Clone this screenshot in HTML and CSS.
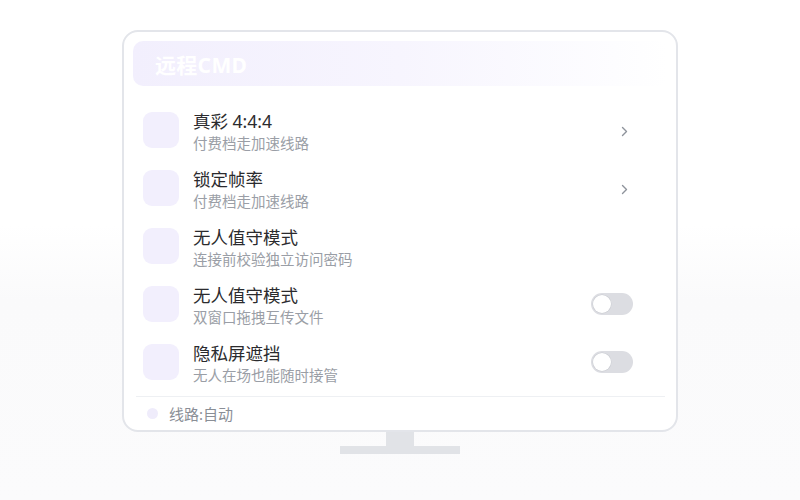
FILE: index.html
```html
<!DOCTYPE html>
<html lang="zh-CN">
<head>
  <meta charset="UTF-8" />
  <meta name="viewport" content="width=device-width, initial-scale=1.0" />
  <title>远程CMD</title>
  <link rel="stylesheet" href="styles.css">
</head>
<body>
  <div class="stage">
    <div class="monitor">
      <header class="panel-head">
        <h1>远程CMD</h1>
      </header>

      <!-- settings list -->
      <ul class="rows">
        <li class="row">
          <span class="row-icon"></span>
          <div class="row-text">
            <p class="row-title">真彩 4:4:4</p>
            <p class="row-sub">付费档走加速线路</p>
          </div>
          <svg class="chev" width="7" height="11" viewBox="0 0 7 11"><path d="M1.5 1.5 L5.5 5.5 L1.5 9.5" fill="none" stroke="#8e939b" stroke-width="1.4" stroke-linecap="round" stroke-linejoin="round"/></svg>
        </li>
        <li class="row">
          <span class="row-icon"></span>
          <div class="row-text">
            <p class="row-title">锁定帧率</p>
            <p class="row-sub">付费档走加速线路</p>
          </div>
          <svg class="chev" width="7" height="11" viewBox="0 0 7 11"><path d="M1.5 1.5 L5.5 5.5 L1.5 9.5" fill="none" stroke="#8e939b" stroke-width="1.4" stroke-linecap="round" stroke-linejoin="round"/></svg>
        </li>
        <li class="row">
          <span class="row-icon"></span>
          <div class="row-text">
            <p class="row-title">无人值守模式</p>
            <p class="row-sub">连接前校验独立访问密码</p>
          </div>
        </li>
        <li class="row">
          <span class="row-icon"></span>
          <div class="row-text">
            <p class="row-title">无人值守模式</p>
            <p class="row-sub">双窗口拖拽互传文件</p>
          </div>
          <span class="toggle"><span class="knob"></span></span>
        </li>
        <li class="row">
          <span class="row-icon"></span>
          <div class="row-text">
            <p class="row-title">隐私屏遮挡</p>
            <p class="row-sub">无人在场也能随时接管</p>
          </div>
          <span class="toggle"><span class="knob"></span></span>
        </li>
      </ul>

      <footer class="panel-foot">
        <span class="dot"></span>
        <span>线路:自动</span>
      </footer>
    </div>
    <div class="neck"></div>
    <div class="base"></div>
  </div>
</body>
</html>
```

FILE: styles.css
```css
html, body, h1, p, ul, li {
  margin: 0;
  padding: 0;
}

body {
  width: 800px;
  height: 500px;
  background: linear-gradient(#ffffff 0, #ffffff 45%, #fafafb 60%, #fbfbfc 100%);
  font-family: "Noto Sans", "Noto Sans CJK SC", sans-serif;
  color: #333;
}

.stage {
  padding-top: 30px;
  display: flex;
  flex-direction: column;
  align-items: center;
}

.monitor {
  box-sizing: border-box;
  width: 556px;
  height: 402px;
  border: 2px solid #e3e5ea;
  border-radius: 16px;
  background: #fff;
  padding: 9px 8px 0 9px;
  display: flex;
  flex-direction: column;
}

.panel-head {
  height: 45px;
  border-radius: 10px;
  background: linear-gradient(90deg, #f2effd 0%, #f7f5fe 50%, #fdfdff 90%, #ffffff 100%);
  display: flex;
  align-items: center;
  padding-left: 22px;
}

.panel-head h1 {
  font-size: 21px;
  font-weight: 700;
  color: #fff;
  letter-spacing: 0.3px;
}

.rows {
  list-style: none;
  margin-top: 15px;
}

.row {
  height: 58px;
  display: flex;
  align-items: center;
  padding: 0 35px 0 10px;
}

.row-icon {
  width: 36px;
  height: 36px;
  border-radius: 9px;
  background: #f2effd;
  flex-shrink: 0;
}

.row-text {
  flex: 1;
  margin-left: 14px;
  margin-top: 3px;
}

.row-title {
  font-size: 17.5px;
  line-height: 22px;
  color: #2b2b2e;
}

.row-sub {
  font-size: 14.5px;
  line-height: 22px;
  color: #9a9ea6;
}

.chev {
  margin-right: 5px;
  margin-top: 2px;
}

.toggle {
  position: relative;
  width: 42px;
  height: 22px;
  border-radius: 11px;
  background: #dcdde2;
}

.knob {
  position: absolute;
  left: 2px;
  top: 2px;
  width: 18px;
  height: 18px;
  border-radius: 50%;
  background: #fff;
  box-shadow: 0 0 0 0.5px #c9cbd1;
}

.panel-foot {
  margin: 5px 3px 0;
  border-top: 1px solid #eef0f3;
  height: 33px;
  display: flex;
  align-items: center;
  padding-left: 11px;
  font-size: 15px;
  color: #8a8e96;
}

.dot {
  width: 11px;
  height: 11px;
  border-radius: 50%;
  background: #efecfb;
  margin-right: 11px;
}

.neck {
  width: 28px;
  height: 14px;
  background: #e1e3e7;
}

.base {
  width: 120px;
  height: 8px;
  background: #e1e3e7;
}
```
